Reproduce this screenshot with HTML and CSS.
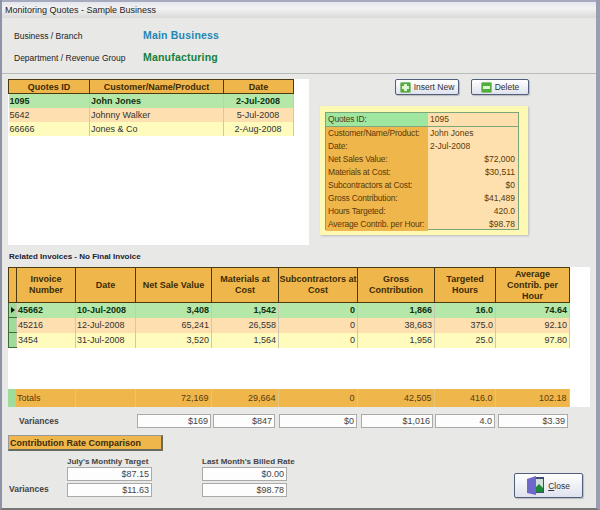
FILE: index.html
```html
<!DOCTYPE html>
<html lang="en">

<head>
    <meta charset="UTF-8">
    <title>Monitoring Quotes - Sample Business</title>
    <link rel="stylesheet" href="styles.css">
</head>

<body>
    <div class="window">
        <div class="titlebar">Monitoring Quotes - Sample Business</div>

        <!-- business and department -->
        <div class="header">
            <div class="header-row">
                <span class="header-label">Business / Branch</span>
                <span class="header-value blue">Main Business</span>
            </div>
            <div class="header-row">
                <span class="header-label">Department / Revenue Group</span>
                <span class="header-value green">Manufacturing</span>
            </div>
        </div>

        <div class="top">
            <div class="quotes-box">
                <table class="grid quotes">
                    <colgroup>
                        <col class="q1">
                        <col class="q2">
                        <col class="q3">
                    </colgroup>
                    <tr class="quotes-head">
                        <th>Quotes ID</th>
                        <th>Customer/Name/Product</th>
                        <th>Date</th>
                    </tr>
                    <tr class="row-current">
                        <td>1095</td>
                        <td>John Jones</td>
                        <td class="center">2-Jul-2008</td>
                    </tr>
                    <tr class="row-a">
                        <td>5642</td>
                        <td>Johnny Walker</td>
                        <td class="center">5-Jul-2008</td>
                    </tr>
                    <tr class="row-b">
                        <td>66666</td>
                        <td>Jones &amp; Co</td>
                        <td class="center">2-Aug-2008</td>
                    </tr>
                </table>
            </div>

            <div class="side">
                <div class="buttons">
                    <button class="btn btn-insert">
                        <svg width="11" height="11" viewBox="0 0 11 11">
                            <rect x="0.5" y="0.5" width="10" height="10" rx="1" fill="#4fae3c" stroke="#8fbf80" />
                            <path d="M4 2h3v2h2v3H7v2H4V7H2V4h2z" fill="#dff5cf" />
                        </svg>
                        Insert New
                    </button>
                    <button class="btn btn-delete">
                        <svg width="11" height="11" viewBox="0 0 11 11">
                            <rect x="0.5" y="0.5" width="10" height="10" rx="1" fill="#4fae3c" stroke="#8fbf80" />
                            <rect x="2" y="4" width="7" height="3" fill="#dff5cf" />
                        </svg>
                        Delete
                    </button>
                </div>

                <div class="card">
                    <div class="card-inner">
                        <div class="card-row card-first"><span class="card-label">Quotes ID:</span><span class="card-value">1095</span></div>
                        <div class="card-row"><span class="card-label">Customer/Name/Product:</span><span class="card-value">John Jones</span></div>
                        <div class="card-row"><span class="card-label">Date:</span><span class="card-value">2-Jul-2008</span></div>
                        <div class="card-row"><span class="card-label">Net Sales Value:</span><span class="card-value right">$72,000</span></div>
                        <div class="card-row"><span class="card-label">Materials at Cost:</span><span class="card-value right">$30,511</span></div>
                        <div class="card-row"><span class="card-label">Subcontractors at Cost:</span><span class="card-value right">$0</span></div>
                        <div class="card-row"><span class="card-label">Gross Contribution:</span><span class="card-value right">$41,489</span></div>
                        <div class="card-row"><span class="card-label">Hours Targeted:</span><span class="card-value right">420.0</span></div>
                        <div class="card-row"><span class="card-label">Average Contrib. per Hour:</span><span class="card-value right">$98.78</span></div>
                    </div>
                </div>
            </div>
        </div>

        <div class="section-title">Related Invoices - No Final Invoice</div>

        <!-- tabela de invoices -->
        <div class="invoices-box">
            <table class="grid invoices">
                <colgroup>
                    <col class="c0">
                    <col class="c1">
                    <col class="c2">
                    <col class="c3">
                    <col class="c4">
                    <col class="c5">
                    <col class="c6">
                    <col class="c7">
                    <col class="c8">
                </colgroup>
                <tr class="invoices-head">
                    <th></th>
                    <th>Invoice Number</th>
                    <th>Date</th>
                    <th>Net Sale Value</th>
                    <th>Materials at Cost</th>
                    <th>Subcontractors at Cost</th>
                    <th>Gross Contribution</th>
                    <th>Targeted Hours</th>
                    <th class="th-narrow">Average Contrib. per Hour</th>
                </tr>
                <tr class="row-current">
                    <td class="selector"><span class="arrow"></span></td>
                    <td>45662</td>
                    <td>10-Jul-2008</td>
                    <td class="right">3,408</td>
                    <td class="right">1,542</td>
                    <td class="right">0</td>
                    <td class="right">1,866</td>
                    <td class="right">16.0</td>
                    <td class="right">74.64</td>
                </tr>
                <tr class="row-a">
                    <td class="selector"></td>
                    <td>45216</td>
                    <td>12-Jul-2008</td>
                    <td class="right">65,241</td>
                    <td class="right">26,558</td>
                    <td class="right">0</td>
                    <td class="right">38,683</td>
                    <td class="right">375.0</td>
                    <td class="right">92.10</td>
                </tr>
                <tr class="row-b">
                    <td class="selector"></td>
                    <td>3454</td>
                    <td>31-Jul-2008</td>
                    <td class="right">3,520</td>
                    <td class="right">1,564</td>
                    <td class="right">0</td>
                    <td class="right">1,956</td>
                    <td class="right">25.0</td>
                    <td class="right">97.80</td>
                </tr>
            </table>

            <table class="grid invoices totals">
                <colgroup>
                    <col class="c0">
                    <col class="c1">
                    <col class="c2">
                    <col class="c3">
                    <col class="c4">
                    <col class="c5">
                    <col class="c6">
                    <col class="c7">
                    <col class="c8">
                </colgroup>
                <tr>
                    <td class="selector"></td>
                    <td>Totals</td>
                    <td></td>
                    <td class="right">72,169</td>
                    <td class="right">29,664</td>
                    <td class="right">0</td>
                    <td class="right">42,505</td>
                    <td class="right">416.0</td>
                    <td class="right">102.18</td>
                </tr>
            </table>
        </div>

        <div class="variances">
            <span class="variances-label">Variances</span>
            <span class="field v1">$169</span>
            <span class="field v2">$847</span>
            <span class="field v3">$0</span>
            <span class="field v4">$1,016</span>
            <span class="field v5">4.0</span>
            <span class="field v6">$3.39</span>
        </div>

        <div class="bottom">
            <div class="comparison">
                <div class="comparison-title">Contribution Rate Comparison</div>
                <div class="rates">
                    <span class="rates-label">Variances</span>
                    <div class="rate-col rate-first">
                        <span class="rate-title">July's Monthly Target</span>
                        <span class="field">$87.15</span>
                        <span class="field">$11.63</span>
                    </div>
                    <div class="rate-col">
                        <span class="rate-title">Last Month's Billed Rate</span>
                        <span class="field">$0.00</span>
                        <span class="field">$98.78</span>
                    </div>
                </div>
            </div>
            <button class="btn btn-close">
                <svg width="17" height="19" viewBox="0 0 17 19">
                    <rect x="7" y="1" width="10" height="16" fill="#3f4a78" />
                    <rect x="9" y="3" width="7" height="13" fill="#cfe0d8" />
                    <path d="M9 16v-5l3-3 4 4v4z" fill="#1d8a3a" />
                    <path d="M0 3l9-3v19l-9-2z" fill="#6f68cc" />
                </svg>
                <span><u>C</u>lose</span>
            </button>
        </div>
    </div>
</body>

</html>
```

FILE: styles.css
```css
/* janela principal */
body {
    margin: 0;
    font-family: "Liberation Sans", Arial, sans-serif;
    font-size: 9px;
    color: #222;
}

.window {
    width: 600px;
    height: 510px;
    box-sizing: border-box;
    background: #e8e8e6;
    border-left: 2px solid #8f93a6;
    border-right: 4px solid #9a9eb4;
    border-bottom: 2px solid #777;
    display: flex;
    flex-direction: column;
    overflow: hidden;
}

.titlebar {
    height: 18px;
    line-height: 17px;
    padding-left: 3px;
    font-size: 9px;
    background: linear-gradient(#e4e6ec, #f2f2f2 40%, #d9d9d9);
    border-top: 2px solid #a7abc0;
    box-sizing: border-box;
    color: #222;
}

/* cabecalho */
.header {
    height: 56px;
    box-sizing: border-box;
    padding-top: 6px;
    border-bottom: 1px solid #bbb;
}

.header-row {
    display: flex;
    align-items: center;
    height: 22px;
}

.header-label {
    width: 129px;
    padding-top: 2px;
    padding-left: 12px;
    font-size: 8.5px;
}

.header-value {
    font-size: 10.5px;
    font-weight: bold;
    letter-spacing: 0.2px;
}

.blue {
    color: #1f86b5;
}

.green {
    color: #15803a;
}

/* parte de cima */
.top {
    display: flex;
    margin-top: 5px;
    padding-left: 6px;
}

.quotes-box {
    width: 301px;
    height: 166px;
    background: #fff;
}

.side {
    margin-left: 11px;
}

.buttons {
    display: flex;
    padding-left: 75px;
    gap: 12px;
}

.btn {
    display: flex;
    align-items: center;
    justify-content: center;
    gap: 3px;
    padding: 0;
    font-family: "Liberation Sans", Arial, sans-serif;
    font-size: 8.5px;
    color: #333;
    background: linear-gradient(#fff, #dfe2ee);
    border: 1px solid #4f5f7c;
    border-radius: 2px;
    box-shadow: 1px 1px 1px #bbb;
}

.btn-insert {
    width: 64px;
    height: 16px;
}

.btn-delete {
    width: 58px;
    height: 16px;
}

.btn-close {
    width: 69px;
    height: 25px;
    gap: 4px;
    margin: 45px 0 0 0;
}

.card {
    width: 208px;
    height: 129px;
    box-sizing: border-box;
    margin-top: 11px;
    padding: 6px 0 0 5px;
    background: #fdf9b5;
    box-shadow: 1px 1px 2px #bbb;
}

.card-inner {
    width: 194px;
    height: 118px;
    box-sizing: border-box;
    border: 1px solid #7fa67a;
    background: #fde0ad;
}

.card-row {
    display: flex;
    height: 13px;
    line-height: 13px;
    color: #5a3a08;
    font-size: 8.5px;
}

.card-first {
    height: 14px;
    line-height: 13px;
    border-bottom: 1px solid #7fa67a;
    box-sizing: border-box;
}

.card-label {
    width: 102px;
    flex: none;
    padding-left: 2px;
    box-sizing: border-box;
    background: #efb64c;
    white-space: nowrap;
    letter-spacing: -0.2px;
}

.card-first .card-label {
    background: #9fe6a0;
}

.card-value {
    flex: 1;
    padding: 0 3px 0 2px;
}

.card-value.right {
    text-align: right;
}

/* tabelas */
.grid {
    border-collapse: collapse;
    table-layout: fixed;
    font-size: 9px;
}

.grid td,
.grid th {
    padding: 0 2px 0 1px;
    overflow: hidden;
}

.grid th {
    padding: 0;
    background: #efb64c;
    border: 1px solid #4a3a10;
    color: #3d2c05;
    font-weight: bold;
    text-align: center;
}

.grid td {
    border-right: 1px solid #c9c9b5;
    height: 14px;
}

.quotes {
    width: 285px;
}

.quotes-head th {
    height: 13px;
    font-size: 9px;
}

.q1 {
    width: 81px;
}

.q2 {
    width: 134px;
}

.q3 {
    width: 70px;
}

.center {
    text-align: center;
}

.right {
    text-align: right;
}

.row-current td {
    background: #b5e8a8;
    font-weight: bold;
    font-size: 9px;
    color: #123012;
}

.row-a td {
    background: #fddfb0;
    color: #333;
}

.row-b td {
    background: #fefbbd;
    color: #333;
}

.section-title {
    height: 22px;
    line-height: 24px;
    padding-left: 7px;
    font-size: 8px;
    font-weight: bold;
    color: #223;
}

.invoices-box {
    width: 582px;
    height: 140px;
    margin-left: 6px;
    background: #fff;
    display: flex;
    flex-direction: column;
    justify-content: space-between;
}

.invoices {
    width: 561px;
}

.invoices-head th {
    height: 34px;
    font-size: 9px;
    line-height: 11px;
}

.invoices-head .th-narrow {
    padding: 0 6px;
}

.c0 {
    width: 8px;
}

.c1 {
    width: 59px;
}

.c2 {
    width: 60px;
}

.c3 {
    width: 76px;
}

.c4 {
    width: 67px;
}

.c5 {
    width: 79px;
}

.c6 {
    width: 77px;
}

.c7 {
    width: 61px;
}

.c8 {
    width: 74px;
}

.selector {
    position: relative;
    background: #9fdc9a !important;
    border: 1px solid #3f6a3a;
}

.arrow {
    position: absolute;
    left: 2px;
    top: 4px;
    border-left: 4px solid #111;
    border-top: 3px solid transparent;
    border-bottom: 3px solid transparent;
}

.totals td {
    height: 18px;
    background: #efb64c;
    color: #5a3a08;
    border-right: 1px solid #e3c67a;
}

.totals .selector {
    background: #9fdc9a !important;
    border: none;
}

/* variances */
.variances {
    display: flex;
    align-items: center;
    height: 15px;
    margin-top: 6px;
}

.variances-label {
    width: 135px;
    padding-left: 17px;
    box-sizing: border-box;
    font-size: 8.5px;
    font-weight: bold;
    color: #444;
}

.field {
    display: block;
    box-sizing: border-box;
    height: 14px;
    line-height: 12px;
    padding-right: 2px;
    text-align: right;
    font-size: 9px;
    color: #444;
    background: #fdfdfd;
    border: 1px solid #aaa;
}

.v1 {
    width: 74px;
    margin-right: 2px;
}

.v2 {
    width: 62px;
    margin-right: 4px;
}

.v3 {
    width: 78px;
    margin-right: 4px;
}

.v4 {
    width: 72px;
    margin-right: 2px;
}

.v5 {
    width: 60px;
    margin-right: 3px;
}

.v6 {
    width: 70px;
}

/* parte de baixo */
.bottom {
    display: flex;
    justify-content: space-between;
    padding-right: 13px;
}

.comparison-title {
    width: 155px;
    height: 16px;
    line-height: 14px;
    margin: 7px 0 0 6px;
    padding-left: 1px;
    box-sizing: border-box;
    font-size: 9px;
    font-weight: bold;
    color: #3d2c05;
    background: #efb64c;
    border: 1px solid #999;
    border-right: 2px solid #6a6a5a;
    border-bottom: 2px solid #6a6a5a;
}

.rates {
    display: flex;
    align-items: flex-end;
    margin-top: 5px;
    padding-left: 7px;
}

.rates-label {
    width: 58px;
    height: 13px;
    font-size: 8.5px;
    font-weight: bold;
    color: #444;
}

.rate-col {
    display: flex;
    flex-direction: column;
    width: 85px;
    gap: 2px;
}

.rate-first {
    margin-right: 50px;
}

.rate-title {
    height: 9px;
    line-height: 11px;
    font-size: 8px;
    font-weight: bold;
    color: #444;
    white-space: nowrap;
}
```
